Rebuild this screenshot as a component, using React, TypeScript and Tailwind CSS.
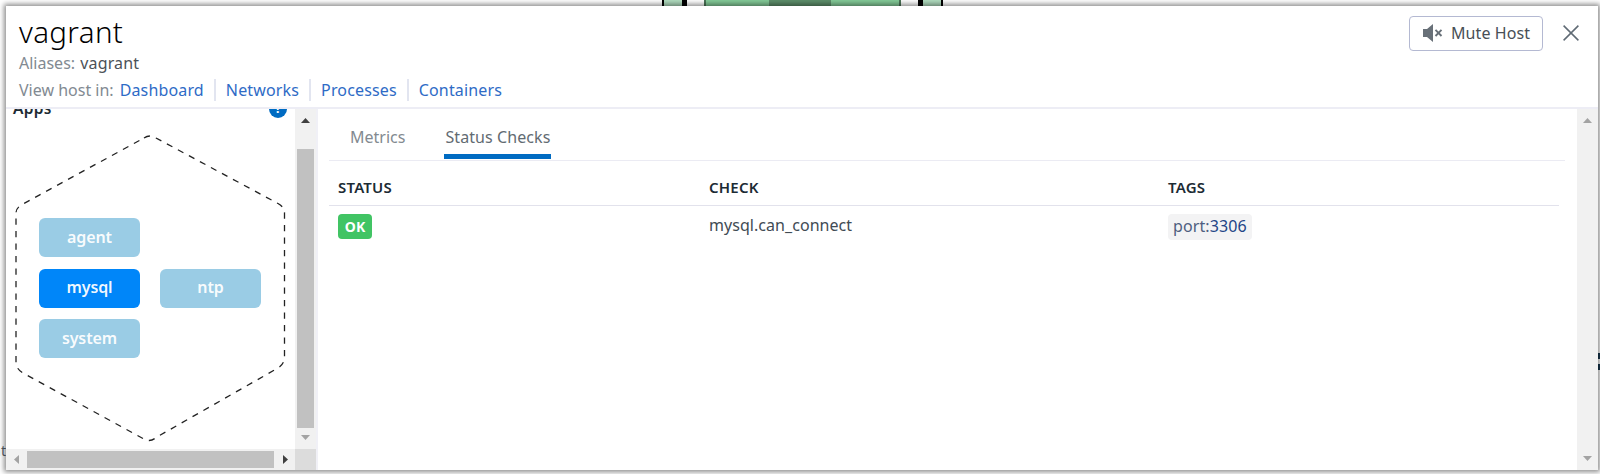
import React from "react";

function Arrow({ dir, dark = false }: { dir: "up" | "down" | "left" | "right"; dark?: boolean }) {
  const d = {
    up: "M0 5 4.5 0 9 5Z",
    down: "M0 0 4.5 5 9 0Z",
    left: "M5 0 0 4.5 5 9Z",
    right: "M0 0 5 4.5 0 9Z",
  }[dir];
  const vertical = dir === "up" || dir === "down";
  return (
    <svg width={vertical ? 9 : 5} height={vertical ? 5 : 9} className={dark ? "fill-[#404040]" : "fill-[#a3a3a3]"}>
      <path d={d} />
    </svg>
  );
}

function AppTile({ name, active = false, className = "" }: { name: string; active?: boolean; className?: string }) {
  return (
    <button
      className={`flex h-[39px] w-[101px] items-center justify-center rounded-[6px] pb-[2px] text-[16px] font-semibold tracking-[-0.1px] text-white/95 ${
        active ? "bg-[#0086f9]" : "bg-[#9acce5]"
      } ${className}`}
    >
      {name}
    </button>
  );
}

function Backdrop() {
  return (
    <div className="flex h-[6px] shrink-0 bg-white pl-[662px]">
      <div className="w-[2px] bg-black" />
      <div className="w-[18px] bg-[#b0dcbf]" />
      <div className="w-[5px] bg-black" />
      <div className="ml-[17px] w-[2px] bg-[#4c7558]" />
      <div className="w-[63px] bg-[#84cb98]" />
      <div className="w-[62px] bg-[#5d8f6b]" />
      <div className="w-[68px] bg-[#84cb98]" />
      <div className="w-[2px] bg-[#4c7558]" />
      <div className="ml-[17px] w-[5px] bg-black" />
      <div className="w-[18px] bg-[#b0dcbf]" />
      <div className="w-[2px] bg-black" />
    </div>
  );
}

function Header() {
  const views = ["Dashboard", "Networks", "Processes", "Containers"];
  return (
    <header className="flex h-[103px] shrink-0 justify-between border-b-2 border-[#ededf5] pl-[13px]">
      <div>
        <h1 className="mt-[6px] h-[40px] text-[29.5px] leading-[40px] font-[350] tracking-[0.35px] text-black">vagrant</h1>
        <p className="h-[22px] text-[16px] leading-[22px] text-[#828a92]">
          Aliases: <span className="ml-[1px] tracking-[0.15px] text-[#4c5258]">vagrant</span>
        </p>
        <nav className="mt-[4px] flex h-[23px] items-center text-[16px] text-[#828a92]">
          <span className="mr-[6px]">View host in:</span>
          {views.map((v, i) => (
            <a
              key={v}
              className={`flex h-[22px] items-center tracking-[0.15px] text-[#2e6bc6] ${
                i ? "ml-[10px] border-l-2 border-[#e2e5f0] pl-[10px]" : ""
              }`}
            >
              {v}
            </a>
          ))}
        </nav>
      </div>
      <div className="mt-[10px] mr-[19px] flex h-[35px] items-center">
        <button className="flex h-[35px] w-[134px] items-center rounded-[4px] border border-[#b4b9d2] pb-[2px] pl-[13px] text-[16px] tracking-[0.1px] text-[#484f56]">
          <svg width="20" height="18" viewBox="0 0 20 18" className="mr-[8px]">
            <path d="M0 5H4L10 0V18L4 13H0Z" fill="#687078" />
            <path d="M12.5 5.800 18.500 12M18.500 5.800 12.500 12" stroke="#687078" strokeWidth="1.900" />
          </svg>
          Mute Host
        </button>
        <svg width="16" height="16" viewBox="0 0 16 16" className="mb-[2px] ml-[20px]">
          <path d="M.6.6 15.4 15.4M15.4.6.6 15.4" stroke="#5f6a74" strokeWidth="1.5" />
        </svg>
      </div>
    </header>
  );
}

function AppsPane() {
  return (
    <aside className="flex w-[312px] shrink-0 flex-col border-r-2 border-[#f0f0f6]">
      <div className="flex h-[340px]">
        <div className="flex w-[289px] flex-col overflow-hidden">
          <div className="-mt-[12px] flex h-[24px] shrink-0 items-center justify-between pr-[8px] pl-[7px]">
            <span className="text-[15.5px] font-semibold tracking-[0.3px] text-[#1c2b34]">Apps</span>
            <span className="flex size-[18px] items-center justify-center rounded-full bg-[#006bc2] text-[13px] font-bold text-white">?</span>
          </div>
          <div className="relative h-[328px] shrink-0">
            <svg width="289" height="328" className="absolute inset-0" fill="none">
              <path
                d="M138 17Q144 13 150 17L272 82.500Q278.500 86 278.500 92V236Q278.500 243 272 247L150 316.500Q144 322 137 317.500L17 252Q10 248 10 241V92Q10 87 16 83.500Z"
                stroke="#222"
                strokeWidth="1.300"
                strokeDasharray="6.250 6.250"
              />
            </svg>
            <div className="relative grid grid-cols-[101px_101px] gap-x-[20px] gap-y-[11.5px] pt-[97px] pl-[33px]">
              <AppTile name="agent" />
              <AppTile name="mysql" active className="col-start-1" />
              <AppTile name="ntp" />
              <AppTile name="system" />
            </div>
          </div>
        </div>
        <div className="flex w-[21px] flex-col items-center bg-[#f1f1f1]">
          <div className="flex h-[40px] shrink-0 pt-[9px]"><Arrow dir="up" dark /></div>
          <div className="h-[279px] w-[17px] shrink-0 bg-[#c1c1c1]" />
          <div className="pt-[7px]"><Arrow dir="down" /></div>
        </div>
      </div>
      <div className="flex h-[21px] items-center bg-[#f1f1f1] pl-[8px]">
        <Arrow dir="left" />
        <div className="mr-[9px] ml-[8px] h-[17px] w-[247px] bg-[#c1c1c1]" />
        <Arrow dir="right" dark />
        <div className="ml-auto h-[21px] w-[21px] bg-[#dcdcdc]" />
      </div>
    </aside>
  );
}

function StatusPane() {
  return (
    <main className="flex min-w-0 flex-1 justify-between">
      <div className="ml-[11px] w-[1236px]">
        <div className="flex h-[52px] border-b border-[#ebebf3] pl-[21px] text-[16px] text-[#838a90]">
          <span className="pt-[16px]">Metrics</span>
          <span className="ml-[39px] h-[50px] w-[107px] border-b-[5px] border-[#006bc2] pt-[16px] text-center tracking-[0.08px] text-[#626b72]">
            Status Checks
          </span>
        </div>
        <div className="grid h-[45px] w-[1230px] grid-cols-[371px_459px_1fr] items-center border-b border-[#e2e2ec] pt-[9px] pl-[9px] text-[15px] font-semibold tracking-[0.2px] text-[#1c2b34]">
          <span>STATUS</span>
          <span>CHECK</span>
          <span>TAGS</span>
        </div>
        <div className="grid w-[1231px] grid-cols-[371px_459px_1fr] items-start pt-[8px] pl-[9px] text-[16px]">
          <span className="flex h-[25px] w-[34px] items-center justify-center rounded-[4px] bg-[#41c464] text-[14px] font-bold text-white">OK</span>
          <span className="leading-[23px] tracking-[0.05px] text-[#414b54]">mysql.can_connect</span>
          <span className="flex h-[26px] w-[84px] items-center rounded-[4px] bg-[#f3f3f4] pb-[2px] pl-[5px] tracking-[0.1px] text-[#4e5e80]">
            port:<span className="text-[#234587]">3306</span>
          </span>
        </div>
      </div>
      <div className="flex w-[21px] shrink-0 flex-col items-center justify-between bg-[#f1f1f1] pt-[9px] pb-[9px]">
        <Arrow dir="up" />
        <Arrow dir="down" />
      </div>
    </main>
  );
}

export default function App() {
  return (
    <div className="flex h-[474px] w-[1600px] flex-col overflow-hidden bg-white font-['Noto_Sans',sans-serif] tracking-normal">
      <Backdrop />
      <div className="flex h-[464px]">
        <div className="flex w-[6px] shrink-0 items-end justify-end overflow-hidden pb-[9px] text-[14px] text-[#59636b]">at</div>
        <section className="relative flex w-[1592px] shrink-0 flex-col bg-white shadow-[0_0_5px_2px_rgba(0,0,0,0.45)]">
          <Header />
          <div className="flex flex-1">
            <AppsPane />
            <StatusPane />
          </div>
        </section>
        <div className="flex flex-1 flex-col gap-[5px] pt-[347px]">
          <div className="h-[6px] bg-[#17384f]" />
          <div className="h-[6px] bg-[#17384f]" />
        </div>
      </div>
    </div>
  );
}
